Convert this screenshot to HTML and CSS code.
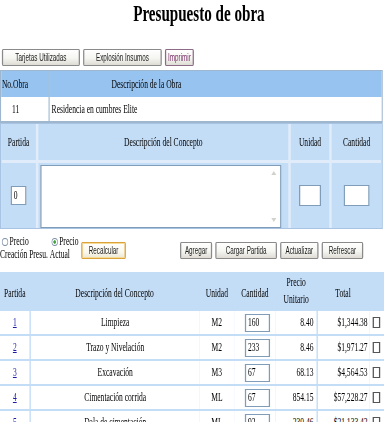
FILE: index.html
```html
<!DOCTYPE html>
<html lang="es">
<head>
<meta charset="utf-8">
<title>Presupuesto de obra</title>
<link rel="stylesheet" href="styles.css">
</head>
<body>
<div class="page">
  <h1 class="title">Presupuesto de obra</h1>

  <div class="toolbar">
    <button class="btn w-tarjetas">Tarjetas Utilizadas</button>
    <button class="btn w-explosion">Explosión Insumos</button>
    <button class="btn btn-visited w-imprimir">Imprimir</button>
  </div>

  <div class="obra">
    <div class="obra-row obra-head">
      <div class="c-no head-no">No.Obra</div>
      <div class="c-desc head-desc">Descripción de la Obra</div>
    </div>
    <div class="obra-row obra-body">
      <div class="c-no body-no">11</div>
      <div class="c-desc body-desc">Residencia en cumbres Elite</div>
    </div>
  </div>

  <div class="concepto">
    <div class="cell">Partida</div>
    <div class="cell">Descripción del Concepto</div>
    <div class="cell">Unidad</div>
    <div class="cell">Cantidad</div>
    <div class="cell cell-partida"><input class="in in-partida" type="text" value="0"></div>
    <div class="cell cell-text">
      <div class="ta-wrap">
        <textarea class="ta"></textarea>
        <span class="sb-up"></span>
        <span class="sb-down"></span>
      </div>
    </div>
    <div class="cell"><input class="in in-unidad" type="text"></div>
    <div class="cell"><input class="in in-cantidad" type="text"></div>
  </div>

  <div class="actions">
    <div class="opts">
      <div class="opt opt-1"><span class="radio"></span>Precio<br>Creación Presu.</div>
      <div class="opt opt-2"><span class="radio radio-on"></span>Precio<br>Actual</div>
    </div>
    <button class="btn btn-focus w-recalcular">Recalcular</button>
    <div class="action-group">
      <button class="btn w-agregar">Agregar</button>
      <button class="btn w-cargar">Cargar Partida</button>
      <button class="btn w-actualizar">Actualizar</button>
      <button class="btn w-refrescar">Refrescar</button>
    </div>
  </div>

  <div class="lista">
    <div class="h">Partida</div>
    <div class="h">Descripción del Concepto</div>
    <div class="h">Unidad</div>
    <div class="h">Cantidad</div>
    <div class="h h-two">Precio<br>Unitario</div>
    <div class="h">Total</div>
    <div class="h"></div>

    <div class="d"><a href="#">1</a></div>
    <div class="d d-desc">Limpieza</div>
    <div class="d">M2</div>
    <div class="d d-cant"><input class="in in-row" type="text" value="160"></div>
    <div class="d d-num">8.40</div>
    <div class="d d-total">$1,344.38</div>
    <div class="d d-chk"><span class="chk"></span></div>

    <div class="d"><a href="#">2</a></div>
    <div class="d d-desc">Trazo y Nivelación</div>
    <div class="d">M2</div>
    <div class="d d-cant"><input class="in in-row" type="text" value="233"></div>
    <div class="d d-num">8.46</div>
    <div class="d d-total">$1,971.27</div>
    <div class="d d-chk"><span class="chk"></span></div>

    <div class="d"><a href="#">3</a></div>
    <div class="d d-desc">Excavación</div>
    <div class="d">M3</div>
    <div class="d d-cant"><input class="in in-row" type="text" value="67"></div>
    <div class="d d-num">68.13</div>
    <div class="d d-total">$4,564.53</div>
    <div class="d d-chk"><span class="chk"></span></div>

    <div class="d"><a href="#">4</a></div>
    <div class="d d-desc">Cimentación corrida</div>
    <div class="d">ML</div>
    <div class="d d-cant"><input class="in in-row" type="text" value="67"></div>
    <div class="d d-num">854.15</div>
    <div class="d d-total">$57,228.27</div>
    <div class="d d-chk"><span class="chk"></span></div>

    <div class="d"><a href="#">5</a></div>
    <div class="d d-desc">Dala de cimentación</div>
    <div class="d">ML</div>
    <div class="d d-cant"><input class="in in-row" type="text" value="92"></div>
    <div class="d d-num">230.46</div>
    <div class="d d-total">$21,133.42</div>
    <div class="d d-chk"><span class="chk"></span></div>
  </div>
</div>
</body>
</html>
```

FILE: styles.css
```css
html, body {
  margin: 0;
  padding: 0;
  overflow: hidden;
  background: #fff;
}
body {
  width: 384px;
  height: 422px;
}

/* The original page is rendered horizontally condensed */
.page {
  width: 610px;
  transform: scaleX(0.6295);
  transform-origin: 0 0;
  font-family: "Liberation Serif", "Times New Roman", serif;
  font-size: 12px;
  color: #000;
}

.title {
  margin: 0;
  padding: 1px 0 0 22px;
  height: 24px;
  line-height: 24px;
  font-size: 24px;
  font-weight: bold;
  text-align: center;
}

/* buttons */
.btn {
  height: 17px;
  padding: 0;
  margin: 0;
  font-family: "Liberation Sans", Arial, sans-serif;
  font-size: 10px;
  line-height: 14px;
  color: #1b1b1b;
  background: linear-gradient(#ffffff, #f5f5f1 55%, #dedcd4);
  border-style: solid;
  border-color: #8a8a8a;
  border-width: 1px 2px;
  border-radius: 2px;
  box-sizing: border-box;
  cursor: pointer;
}
.btn-visited {
  color: #7a2f68;
  border-color: #8d6a86;
}
.btn-focus {
  border-color: #dba23c;
  box-shadow: inset 0 0 0 1px #f7dc96;
  background: linear-gradient(#ffffff, #fbf8ee 60%, #ece6d2);
}
.w-tarjetas { width: 124px; }
.w-explosion { width: 125px; }
.w-imprimir { width: 46px; }
.w-recalcular { width: 71px; }
.w-agregar { width: 51px; }
.w-cargar { width: 98px; }
.w-actualizar { width: 61px; }
.w-refrescar { width: 66px; }

.toolbar {
  display: flex;
  gap: 5px;
  padding-left: 3px;
  margin-top: 24px;
  height: 17px;
}

/* obra table */
.obra {
  margin: 4px 2px 0 0;
  border-style: solid;
  border-color: #9fb6cf;
  border-width: 1px 2px 2px 2px;
}
.obra-row {
  display: grid;
  grid-template-columns: 77px 1fr;
}
.obra-row > div {
  display: flex;
  align-items: center;
}
.obra-head {
  height: 26px;
  background: #96c3f0;
}
.obra-body {
  height: 24px;
  background: #fff;
}
.c-no {
  border-right: 2px solid #a9c0d8;
}
.head-no { padding-left: 1px; }
.head-desc { padding-left: 98px; }
.body-no { padding-left: 17px; }
.body-desc { padding-left: 3px; }

/* concepto entry grid */
.concepto {
  display: grid;
  grid-template-columns: 55px 397px 61px 79px;
  grid-template-rows: 36px 65px;
  gap: 3px 4px;
  margin-right: 2px;
  background: #e0ecf9;
  border-style: solid;
  border-color: #a8c4e2;
  border-width: 1px 2px;
}
.cell {
  background: #c4ddf7;
  display: flex;
  align-items: center;
  justify-content: center;
}
.cell-partida {
  justify-content: flex-start;
  padding-left: 15px;
}
.cell-text {
  align-items: flex-start;
  justify-content: flex-start;
}

.in {
  box-sizing: border-box;
  margin: 0;
  padding: 0 3px;
  font-family: "Liberation Serif", "Times New Roman", serif;
  font-size: 12px;
  color: #000;
  background: #fff;
  border-style: solid;
  border-color: #7f9db9;
  border-width: 1px 2px;
  outline: none;
}
.in-partida { width: 25px; height: 19px; }
.in-unidad { width: 35px; height: 21px; }
.in-cantidad { width: 41px; height: 21px; }
.in-row { width: 40px; height: 18px; }

.ta-wrap {
  position: relative;
  margin: 2px 0 0 3px;
  width: 383px;
  height: 63px;
}
.ta {
  display: block;
  box-sizing: border-box;
  width: 383px;
  height: 63px;
  margin: 0;
  padding: 2px;
  resize: none;
  background: #fff;
  border-style: solid;
  border-color: #7f9db9;
  border-width: 1px 2px;
  outline: none;
}
.sb-up, .sb-down {
  position: absolute;
  right: 8px;
  width: 0;
  height: 0;
  border-left: 4px solid transparent;
  border-right: 4px solid transparent;
}
.sb-up {
  top: 6px;
  border-bottom: 4px solid #d2d2cc;
}
.sb-down {
  bottom: 6px;
  border-top: 4px solid #d2d2cc;
}

/* actions row */
.actions {
  display: flex;
  align-items: flex-start;
  height: 43px;
  padding-top: 6px;
  box-sizing: border-box;
}
.opts {
  display: flex;
}
.opt {
  line-height: 13px;
  white-space: nowrap;
}
.opt-1 { width: 79px; }
.opt-2 { width: 45px; }
.radio {
  display: inline-block;
  box-sizing: border-box;
  width: 10px;
  height: 8px;
  margin: 0 2px 0 3px;
  border: 1px solid #7d8ea5;
  border-radius: 50%;
  background: #fff;
  vertical-align: -1px;
}
.radio-on {
  background: radial-gradient(ellipse at center, #3c9c3c 0, #4fae4f 35%, #ffffff 45%);
}
.w-recalcular {
  margin: 7px 0 0 5px;
}
.action-group {
  display: flex;
  gap: 5px;
  margin: 7px 0 0 86px;
}

/* list grid */
.lista {
  display: grid;
  grid-template-columns: 47px 270px 55px 66px 65px 84px 23px;
  grid-template-rows: 37px;
  grid-auto-rows: 23px;
  row-gap: 2px;
  background: #c4ddf7;
}
.h {
  display: flex;
  align-items: center;
  justify-content: center;
  text-align: center;
  padding-top: 5px;
  box-sizing: border-box;
}
.h-two {
  line-height: 17px;
  padding-top: 0;
}
.d {
  background: #fff;
  display: flex;
  align-items: center;
  justify-content: center;
  white-space: nowrap;
}
.d a {
  color: #1c1ca8;
  text-decoration: underline;
}
.d-desc {
  border-left: 2px solid #c4ddf7;
}
.d-cant {
  justify-content: flex-start;
  padding-left: 17px;
}
.d-num {
  justify-content: flex-end;
  padding-right: 5px;
}
.d-total {
  justify-content: flex-end;
  padding-right: 3px;
  border-left: 2px solid #c4ddf7;
}
.d-chk {
  justify-content: flex-start;
  padding-left: 5px;
}
.chk {
  display: block;
  box-sizing: border-box;
  width: 12px;
  height: 11px;
  background: #fff;
  border-style: solid;
  border-color: #555;
  border-width: 1px 2px;
}
```
